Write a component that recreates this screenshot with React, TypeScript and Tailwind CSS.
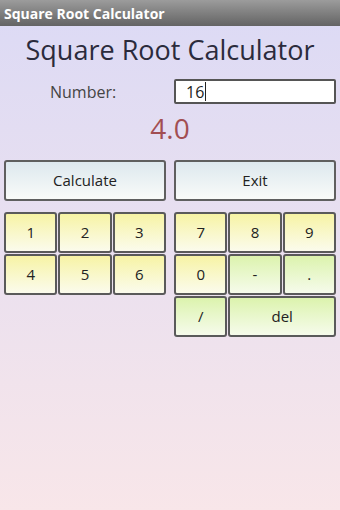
import type { ReactNode } from 'react';

type Tone = 'yellow' | 'green';

const toneClass: Record<Tone, string> = {
  yellow: 'bg-gradient-to-b from-[#f7f3a4] to-[#fbfbec]',
  green: 'bg-gradient-to-b from-[#dcf3ad] to-[#f6fbeb]',
};

function Key({ label, tone = 'yellow', className = '' }: { label: string; tone?: Tone; className?: string }) {
  return (
    <button
      type="button"
      className={`flex h-[41px] items-center justify-center rounded-[3px] border-2 border-[#5a5a5a] text-[15px] text-[#222] ${toneClass[tone]} ${className}`}
    >
      {label}
    </button>
  );
}

function ActionButton({ children }: { children: ReactNode }) {
  return (
    <button
      type="button"
      className="flex h-[41px] w-[162px] items-center justify-center rounded-[3px] border-2 border-[#5f5f5f] bg-gradient-to-b from-[#dde8ee] to-[#f9fbf9] text-[15px] text-[#222]"
    >
      {children}
    </button>
  );
}

export default function App() {
  return (
    <div
      className="flex h-[510px] w-[340px] flex-col bg-gradient-to-b from-[#dcdaf5] to-[#f8e6e9] text-[#333]"
      style={{ fontFamily: '"Open Sans", "DejaVu Sans", sans-serif' }}
    >
      <div className="flex h-[26px] items-center bg-gradient-to-b from-[#9c9c9c] to-[#646464] px-[4px] text-[14px] font-bold text-white">
        Square Root Calculator
      </div>

      <h1 className="mt-[6px] text-center text-[27px] leading-[36px] text-[#2b2b3c]">Square Root Calculator</h1>

      <div className="mt-[11px] flex items-center pr-[4px]">
        <span className="w-[174px] pl-[50px] text-[16px] text-[#444]">Number:</span>
        <div className="flex h-[25px] flex-1 items-center rounded-[2px] border-2 border-[#555] bg-white pl-[10px] text-[16px] text-[#222]">
          16
          <span className="ml-[1px] h-[19px] w-px bg-[#222]" />
        </div>
      </div>

      <div className="mt-[6px] text-center text-[28px] leading-[36px] text-[#a24e52]">4.0</div>

      <div className="mt-[14px] flex justify-between px-[4px]">
        <ActionButton>Calculate</ActionButton>
        <ActionButton>Exit</ActionButton>
      </div>

      <div className="mt-[11px] flex justify-between px-[4px]">
        <div className="grid w-[162px] grid-cols-3 content-start gap-[1px]">
          {['1', '2', '3', '4', '5', '6'].map((k) => (
            <Key key={k} label={k} />
          ))}
        </div>
        <div className="grid w-[162px] grid-cols-3 content-start gap-[1px]">
          <Key label="7" />
          <Key label="8" />
          <Key label="9" />
          <Key label="0" />
          <Key label="-" tone="green" />
          <Key label="." tone="green" />
          <Key label="/" tone="green" />
          <Key label="del" tone="green" className="col-span-2" />
        </div>
      </div>
    </div>
  );
}
